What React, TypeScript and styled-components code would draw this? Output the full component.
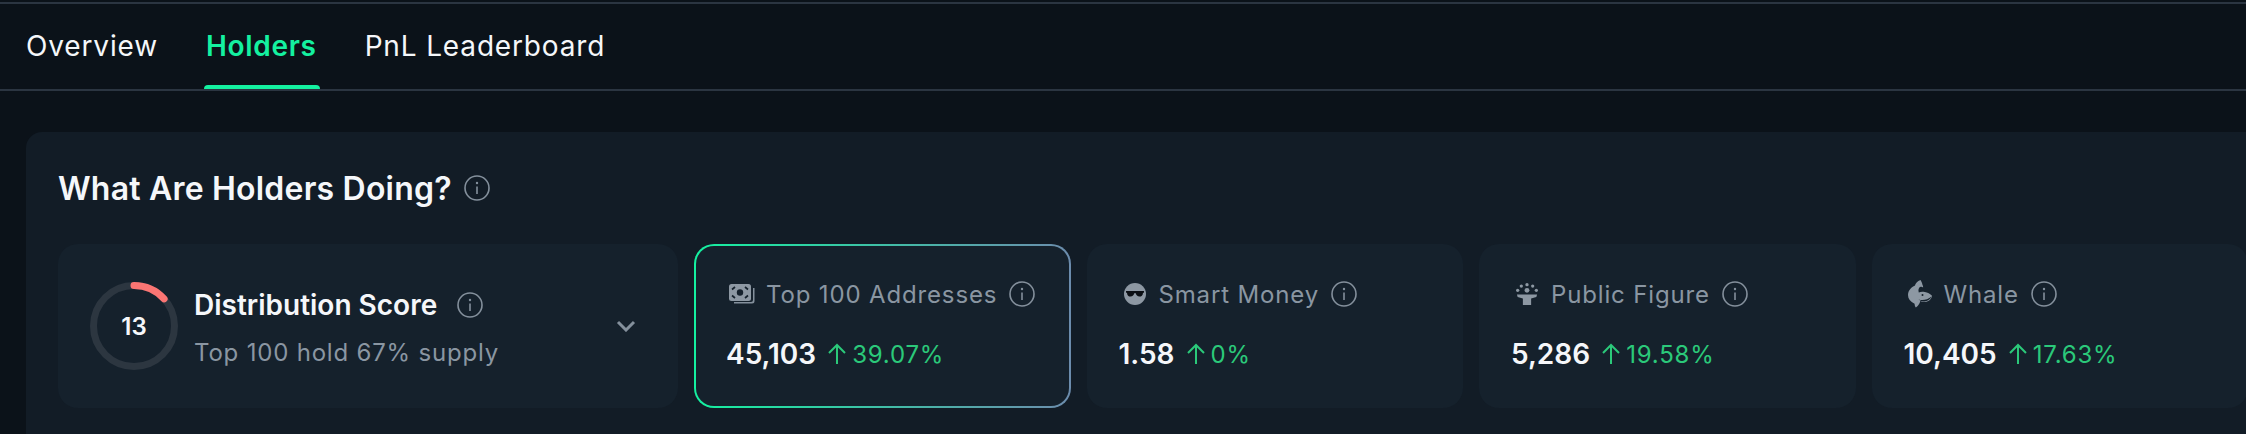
import React from 'react';
import styled, { createGlobalStyle } from 'styled-components';

const GlobalStyle = createGlobalStyle`
  html, body {
    margin: 0;
    padding: 0;
    background: #0b1219;
    overflow: hidden;
  }
`;

const Page = styled.div`
  width: 2246px;
  height: 434px;
  overflow: hidden;
  background: #0b1219;
  font-family: Inter, 'Noto Sans', sans-serif;
  border-top: 2px solid transparent;
  box-sizing: border-box;
`;

const TopLine = styled.div`
  height: 2px;
  background: #2b3541;
`;

const TabBar = styled.div`
  display: flex;
  align-items: center;
  gap: 48px;
  height: 85px;
  padding-left: 26px;
  border-bottom: 2px solid #2b3541;
`;

const Tab = styled.div<{ $active?: boolean }>`
  position: relative;
  height: 85px;
  display: flex;
  align-items: center;
  padding-bottom: 2px;
  box-sizing: border-box;
  white-space: nowrap;
  font-size: 28px;
  font-weight: ${(p) => (p.$active ? 600 : 400)};
  letter-spacing: ${(p) => (p.$active ? '0.7px' : '0.85px')};
  color: ${(p) => (p.$active ? '#14f1a0' : '#f5f7fa')};

  ${(p) =>
    p.$active &&
    `
    &::after {
      content: '';
      position: absolute;
      left: -2px;
      right: -3px;
      bottom: 0;
      height: 4px;
      border-radius: 4px 4px 0 0;
      background: #14f1a0;
    }
  `}
`;

const Panel = styled.section`
  margin: 41px 0 0 26px;
  width: 2400px;
  height: 320px;
  padding: 32px;
  box-sizing: border-box;
  border-radius: 16px;
  background: #121c26;
`;

const PanelTitle = styled.h2`
  display: flex;
  align-items: center;
  gap: 12px;
  height: 48px;
  margin: 0 0 32px;
  font-size: 32px;
  font-weight: 600;
  letter-spacing: 0.2px;
  color: #f5f7fa;
`;

const Cards = styled.div`
  display: flex;
  gap: 16px;
`;

const Card = styled.div`
  flex: none;
  width: 376.5px;
  height: 164px;
  padding: 34px 32px;
  box-sizing: border-box;
  border-radius: 20px;
  background: #15212c;
`;

const ActiveCard = styled(Card)`
  padding: 32px 30px;
  border: 2px solid transparent;
  background:
    linear-gradient(#15212c, #15212c) padding-box,
    linear-gradient(90deg, #14f1a0 0%, #6c8cad 100%) border-box;
`;

const ScoreCard = styled(Card)`
  width: 620px;
  padding: 32px;
  display: flex;
  align-items: center;
  gap: 16px;
`;

const Ring = styled.div`
  flex: none;
  position: relative;
  width: 88px;
  height: 88px;
  display: flex;
  align-items: center;
  justify-content: center;
  font-size: 24px;
  font-weight: 600;
  color: #f5f7fa;

  svg {
    position: absolute;
    inset: 0;
  }
`;

const ScoreText = styled.div`
  flex: 1;
  padding-top: 4px;
`;

const ScoreTitle = styled.div`
  display: flex;
  align-items: center;
  gap: 20px;
  font-size: 28px;
  line-height: 36px;
  font-weight: 600;
  color: #f5f7fa;
`;

const ScoreSub = styled.div`
  margin-top: 14px;
  font-size: 24px;
  line-height: 32px;
  letter-spacing: 0.8px;
  color: #8a96a2;
`;

const Chevron = styled.svg`
  flex: none;
  margin-right: 10px;
`;

const Label = styled.div`
  display: flex;
  align-items: center;
  height: 32px;
  white-space: nowrap;
  font-size: 24px;
  letter-spacing: 0.85px;
  color: #8a96a2;
`;

const IconBox = styled.span`
  flex: none;
  width: 32px;
  height: 32px;
  margin-right: 8px;
  display: flex;
  align-items: center;
  justify-content: center;
`;

const InfoGap = styled.span`
  display: flex;
  margin-left: 12px;
`;

const Values = styled.div`
  display: flex;
  align-items: center;
  margin-top: 26px;
  height: 36px;
`;

const Value = styled.span`
  font-size: 28px;
  font-weight: 600;
  color: #f5f7fa;
`;

const Change = styled.span`
  display: flex;
  align-items: center;
  gap: 5px;
  margin-left: 11px;
  font-size: 24px;
  letter-spacing: 0.8px;
  color: #2bc97a;
`;

const InfoIcon = ({ size = 26 }: { size?: number }) => (
  <svg width={size} height={size} viewBox='0 0 26 26' fill='none'>
    <circle cx='13' cy='13' r='12' stroke='#84909c' strokeWidth='1.6' />
    <circle cx='13' cy='8' r='1.2' fill='#84909c' />
    <path d='M13 11.5V19' stroke='#84909c' strokeWidth='1.6' />
  </svg>
);

const ArrowUp = () => (
  <svg width='20' height='22' viewBox='0 0 20 22' fill='none'>
    <path d='M10 21V2M2 10l8-8 8 8' stroke='#2bc97a' strokeWidth='2' />
  </svg>
);

const MoneyIcon = () => (
  <svg width='26' height='20' viewBox='0 0 26 20'>
    <path d='M24 4v12a2 2 0 0 1-2 2H5v1.5h18a2.5 2.5 0 0 0 2.5-2.5V4z' fill='#84909c' />
    <rect x='0' y='0' width='22' height='17' rx='2.5' fill='#8d98a3' />
    <circle cx='11' cy='8.5' r='3.2' fill='#15212c' />
    <path
      d='M3 5.5 6 3M19 5.5 16 3M3 11.5 6 14M19 11.5 16 14'
      stroke='#15212c'
      strokeWidth='1.7'
      fill='none'
    />
  </svg>
);

const SmartIcon = () => (
  <svg width='22' height='22' viewBox='0 0 22 22'>
    <circle cx='11' cy='11' r='11' fill='#8d98a3' />
    <path
      d='M2 8h18v1.5l-1 .4c-.3 2.6-1.5 3.6-3.5 3.6S12 12 11.8 10.2h-1.6C10 12 8.500 13.500 6.500 13.500S3.300 12.500 3 9.900l-1-.4z'
      fill='#0b0f14'
    />
  </svg>
);

const PublicIcon = () => (
  <svg width='22' height='22' viewBox='0 0 24 24' fill='#8d98a3'>
    <circle cx='12' cy='1.800' r='1.800' />
    <circle cx='5.800' cy='3.400' r='1.800' />
    <circle cx='18.200' cy='3.400' r='1.800' />
    <circle cx='1.800' cy='8' r='1.800' />
    <circle cx='22.200' cy='8' r='1.800' />
    <circle cx='12' cy='8' r='2.600' />
    <path d='M1 12.500h22l-.8 2.800-5.700 1.500V24h-9v-7.200l-5.700-1.500z' />
  </svg>
);

const WhaleIcon = () => (
  <svg width='24' height='28' viewBox='0 0 24 28' fill='#8d98a3'>
    <path d='M12.500 0c1 1.500 1.800 3.300 2 5 .5.700.7 1.500.6 2.400-1-.6-2-.7-3-.3-1.600.8-2 3.100-1.300 5.400 1.400-.7 3-.9 4.700-.7 3.400.4 6.400 1.700 8.500 4-.5 3.400-3 5.800-6.800 6.200-2 .2-3.600-.2-5-.9-.3 2.400-1.600 4.400-4.300 6.400-.9-1.200-1.300-2.400-1.300-3.800C2.300 21.600 0 18.800 0 15c0-4.700 3.300-8 7-9.600.3-1.900 2.300-4.200 5.500-5.400z' />
    <circle cx='14.500' cy='15' r='1' fill='#15212c' />
    <path d='M10.500 19.500c4.500 1.200 9 .4 13-3-1.800 4.700-8 6.700-13 3z' fill='#15212c' />
  </svg>
);

const stats = [
  { label: 'Top 100 Addresses', value: '45,103', change: '39.07%', icon: <MoneyIcon />, active: true },
  { label: 'Smart Money', value: '1.58', change: '0%', icon: <SmartIcon /> },
  { label: 'Public Figure', value: '5,286', change: '19.58%', icon: <PublicIcon /> },
  { label: 'Whale', value: '10,405', change: '17.63%', icon: <WhaleIcon /> },
];

export default function App() {
  return (
    <Page>
      <GlobalStyle />
      <TopLine />
      <TabBar>
        <Tab>Overview</Tab>
        <Tab $active>Holders</Tab>
        <Tab>PnL Leaderboard</Tab>
      </TabBar>
      <Panel>
        <PanelTitle>
          What Are Holders Doing?
          <InfoIcon />
        </PanelTitle>
        <Cards>
          <ScoreCard>
            <Ring>
              <svg width='88' height='88' viewBox='0 0 88 88' fill='none'>
                <circle cx='44' cy='44' r='40.500' stroke='#2c3640' strokeWidth='7' />
                <path
                  d='M44 3.500A40.500 40.500 0 0 1 74.100 16.900'
                  stroke='#fb7573'
                  strokeWidth='7'
                  strokeLinecap='round'
                />
              </svg>
              13
            </Ring>
            <ScoreText>
              <ScoreTitle>
                Distribution Score
                <InfoIcon />
              </ScoreTitle>
              <ScoreSub>Top 100 hold 67% supply</ScoreSub>
            </ScoreText>
            <Chevron width='20' height='12' viewBox='0 0 20 12' fill='none'>
              <path d='M2 2l8 8 8-8' stroke='#84909c' strokeWidth='3' />
            </Chevron>
          </ScoreCard>
          {stats.map((s) => {
            const Box = s.active ? ActiveCard : Card;
            return (
              <Box key={s.label}>
                <Label>
                  <IconBox>{s.icon}</IconBox>
                  {s.label}
                  <InfoGap>
                    <InfoIcon />
                  </InfoGap>
                </Label>
                <Values>
                  <Value>{s.value}</Value>
                  <Change>
                    <ArrowUp />
                    {s.change}
                  </Change>
                </Values>
              </Box>
            );
          })}
        </Cards>
      </Panel>
    </Page>
  );
}
